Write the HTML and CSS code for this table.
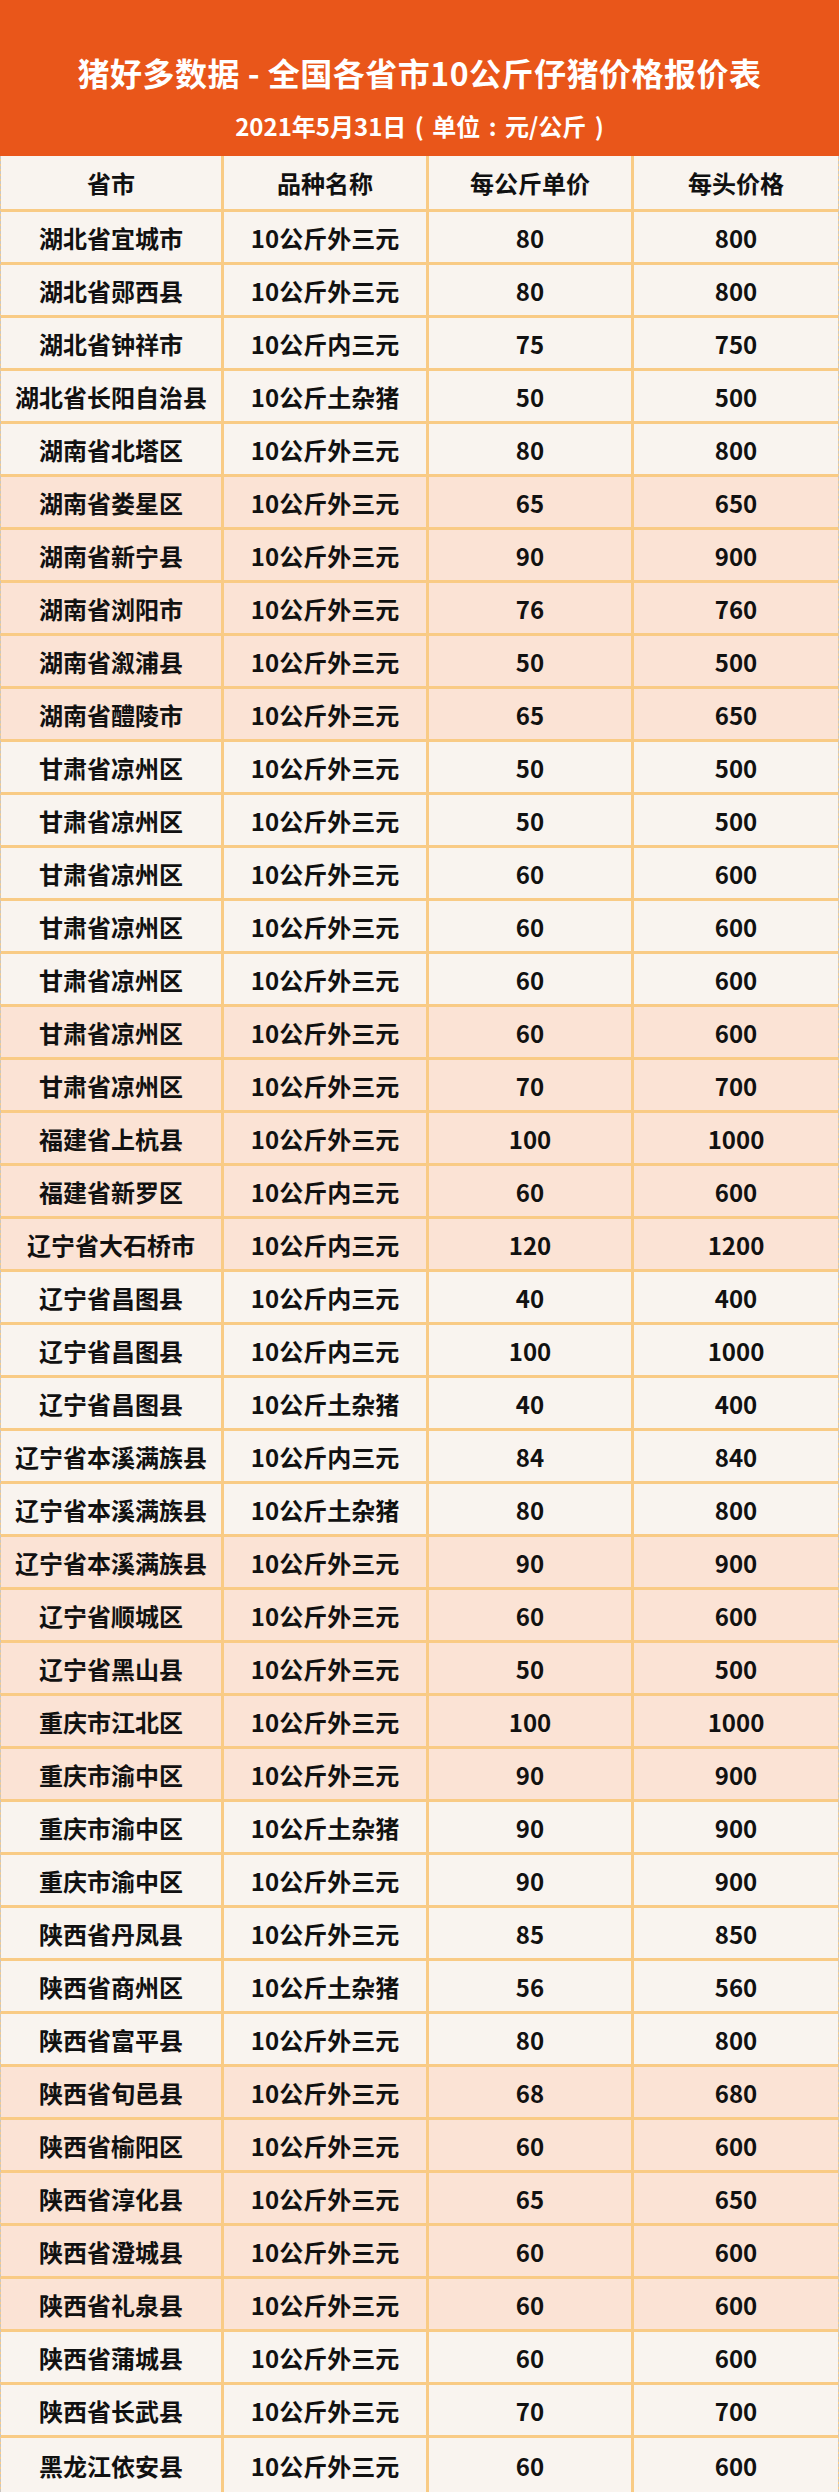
FILE: index.html
```html
<!DOCTYPE html>
<html lang="zh-CN">
<head>
<meta charset="utf-8">
<title>猪好多数据 - 全国各省市10公斤仔猪价格报价表</title>
<link rel="stylesheet" href="styles.css">
</head>
<body>
<div class="page">
  <header class="banner">
    <h1 class="title">猪好多数据 - 全国各省市10公斤仔猪价格报价表</h1>
    <p class="subtitle">2021年5月31日 ( 单位 : 元/公斤 )</p>
  </header>
  <div class="table">
    <div class="row head"><div>省市</div><div>品种名称</div><div>每公斤单价</div><div>每头价格</div></div>
    <div class="row"><div>湖北省宜城市</div><div>10公斤外三元</div><div>80</div><div>800</div></div>
    <div class="row"><div>湖北省郧西县</div><div>10公斤外三元</div><div>80</div><div>800</div></div>
    <div class="row"><div>湖北省钟祥市</div><div>10公斤内三元</div><div>75</div><div>750</div></div>
    <div class="row"><div>湖北省长阳自治县</div><div>10公斤土杂猪</div><div>50</div><div>500</div></div>
    <div class="row"><div>湖南省北塔区</div><div>10公斤外三元</div><div>80</div><div>800</div></div>
    <div class="row alt"><div>湖南省娄星区</div><div>10公斤外三元</div><div>65</div><div>650</div></div>
    <div class="row alt"><div>湖南省新宁县</div><div>10公斤外三元</div><div>90</div><div>900</div></div>
    <div class="row alt"><div>湖南省浏阳市</div><div>10公斤外三元</div><div>76</div><div>760</div></div>
    <div class="row alt"><div>湖南省溆浦县</div><div>10公斤外三元</div><div>50</div><div>500</div></div>
    <div class="row alt"><div>湖南省醴陵市</div><div>10公斤外三元</div><div>65</div><div>650</div></div>
    <div class="row"><div>甘肃省凉州区</div><div>10公斤外三元</div><div>50</div><div>500</div></div>
    <div class="row"><div>甘肃省凉州区</div><div>10公斤外三元</div><div>50</div><div>500</div></div>
    <div class="row"><div>甘肃省凉州区</div><div>10公斤外三元</div><div>60</div><div>600</div></div>
    <div class="row"><div>甘肃省凉州区</div><div>10公斤外三元</div><div>60</div><div>600</div></div>
    <div class="row"><div>甘肃省凉州区</div><div>10公斤外三元</div><div>60</div><div>600</div></div>
    <div class="row alt"><div>甘肃省凉州区</div><div>10公斤外三元</div><div>60</div><div>600</div></div>
    <div class="row alt"><div>甘肃省凉州区</div><div>10公斤外三元</div><div>70</div><div>700</div></div>
    <div class="row alt"><div>福建省上杭县</div><div>10公斤外三元</div><div>100</div><div>1000</div></div>
    <div class="row alt"><div>福建省新罗区</div><div>10公斤内三元</div><div>60</div><div>600</div></div>
    <div class="row alt"><div>辽宁省大石桥市</div><div>10公斤内三元</div><div>120</div><div>1200</div></div>
    <div class="row"><div>辽宁省昌图县</div><div>10公斤内三元</div><div>40</div><div>400</div></div>
    <div class="row"><div>辽宁省昌图县</div><div>10公斤内三元</div><div>100</div><div>1000</div></div>
    <div class="row"><div>辽宁省昌图县</div><div>10公斤土杂猪</div><div>40</div><div>400</div></div>
    <div class="row"><div>辽宁省本溪满族县</div><div>10公斤内三元</div><div>84</div><div>840</div></div>
    <div class="row"><div>辽宁省本溪满族县</div><div>10公斤土杂猪</div><div>80</div><div>800</div></div>
    <div class="row alt"><div>辽宁省本溪满族县</div><div>10公斤外三元</div><div>90</div><div>900</div></div>
    <div class="row alt"><div>辽宁省顺城区</div><div>10公斤外三元</div><div>60</div><div>600</div></div>
    <div class="row alt"><div>辽宁省黑山县</div><div>10公斤外三元</div><div>50</div><div>500</div></div>
    <div class="row alt"><div>重庆市江北区</div><div>10公斤外三元</div><div>100</div><div>1000</div></div>
    <div class="row alt"><div>重庆市渝中区</div><div>10公斤外三元</div><div>90</div><div>900</div></div>
    <div class="row"><div>重庆市渝中区</div><div>10公斤土杂猪</div><div>90</div><div>900</div></div>
    <div class="row"><div>重庆市渝中区</div><div>10公斤外三元</div><div>90</div><div>900</div></div>
    <div class="row"><div>陕西省丹凤县</div><div>10公斤外三元</div><div>85</div><div>850</div></div>
    <div class="row"><div>陕西省商州区</div><div>10公斤土杂猪</div><div>56</div><div>560</div></div>
    <div class="row"><div>陕西省富平县</div><div>10公斤外三元</div><div>80</div><div>800</div></div>
    <div class="row alt"><div>陕西省旬邑县</div><div>10公斤外三元</div><div>68</div><div>680</div></div>
    <div class="row alt"><div>陕西省榆阳区</div><div>10公斤外三元</div><div>60</div><div>600</div></div>
    <div class="row alt"><div>陕西省淳化县</div><div>10公斤外三元</div><div>65</div><div>650</div></div>
    <div class="row alt"><div>陕西省澄城县</div><div>10公斤外三元</div><div>60</div><div>600</div></div>
    <div class="row alt"><div>陕西省礼泉县</div><div>10公斤外三元</div><div>60</div><div>600</div></div>
    <div class="row"><div>陕西省蒲城县</div><div>10公斤外三元</div><div>60</div><div>600</div></div>
    <div class="row"><div>陕西省长武县</div><div>10公斤外三元</div><div>70</div><div>700</div></div>
    <div class="row last"><div>黑龙江依安县</div><div>10公斤外三元</div><div>60</div><div>600</div></div>
  </div>
</div>
</body>
</html>
```

FILE: styles.css
```css
html, body {
  margin: 0;
  padding: 0;
  background: #f9f4ef;
}

body {
  font-family: "Noto Sans CJK SC", "Noto Sans", sans-serif;
  color: #111;
}

.page {
  width: 839px;
}

.banner {
  height: 156px;
  box-sizing: border-box;
  background: #e9561a;
  padding-top: 52px;
  text-align: center;
  color: #fff;
}

.title {
  margin: 0;
  font-size: 32px;
  line-height: 40px;
  font-weight: 700;
  letter-spacing: 0.5px;
}

.subtitle {
  margin: 18px 0 0;
  font-size: 24px;
  line-height: 32px;
  font-weight: 700;
  word-spacing: 3px;
}

.table {
  display: flex;
  flex-direction: column;
  gap: 3px;
  background: #f9cb85;
  border-left: 1px dashed #c9c6c2;
  border-right: 1px dashed #c9c6c2;
}

.row {
  display: grid;
  grid-template-columns: 220px 202px 202px 1fr;
  column-gap: 3px;
  height: 50px;
}

.row.head {
  height: 53px;
}

.row.last {
  height: 54px;
}

.row > div {
  display: flex;
  align-items: center;
  justify-content: center;
  background: #f9f4ef;
  font-size: 24px;
  font-weight: 700;
  white-space: nowrap;
}

.row.alt > div {
  background: #fbe3d5;
}
```
